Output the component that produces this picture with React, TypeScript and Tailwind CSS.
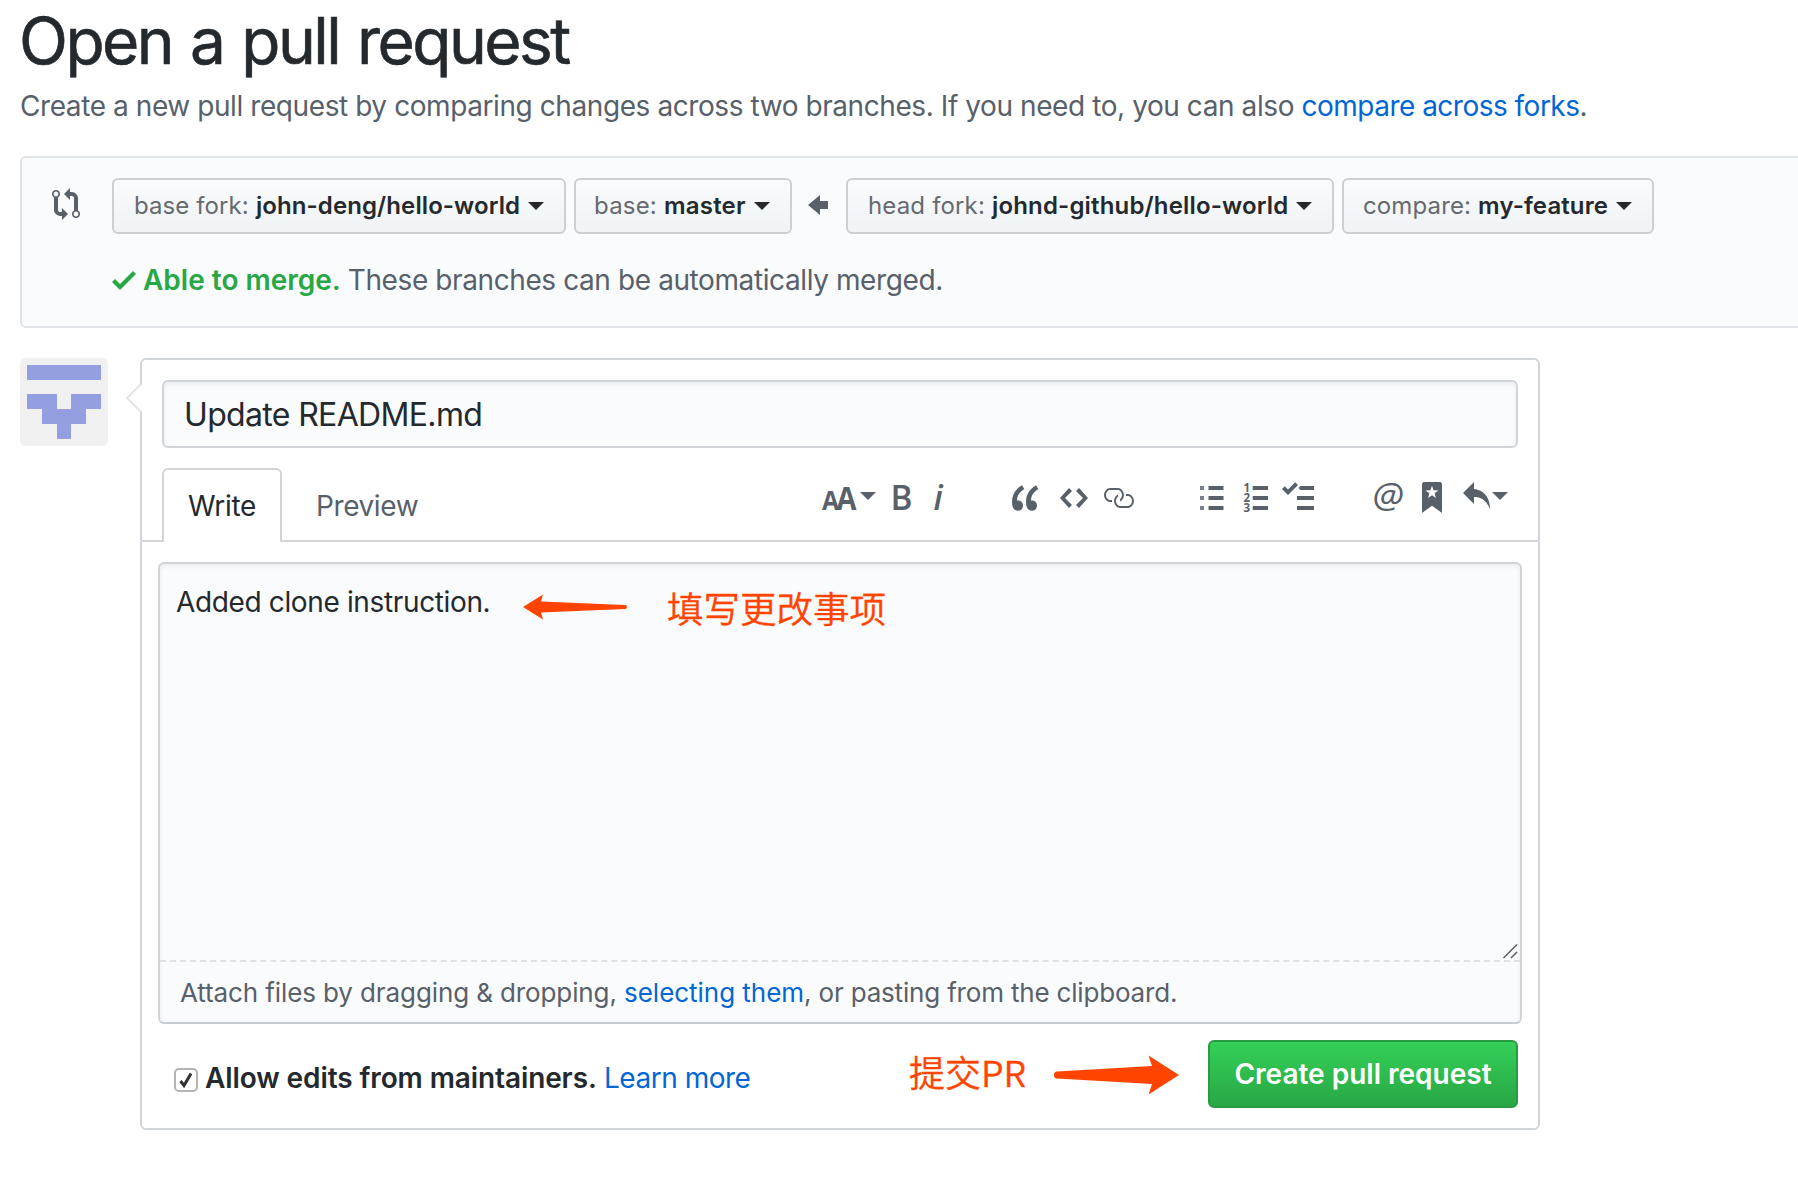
import type { ReactNode } from "react";

function Caret({ className = "" }: { className?: string }) {
  return (
    <svg viewBox="0 0 16 8" className={`h-2 w-4 shrink-0 ${className}`} fill="currentColor">
      <path d="M0 0h16L8 8z" />
    </svg>
  );
}

function Icon({ d, w, className = "" }: { d: string; w: number; className?: string }) {
  return (
    <svg viewBox={`0 0 ${w} 16`} width={w * 2} height={32} className={`block shrink-0 ${className}`} fill="currentColor">
      <path fillRule="evenodd" d={d} />
    </svg>
  );
}

const COMPARE =
  "M5 12H4c-.27-.02-.48-.11-.69-.31-.21-.2-.3-.42-.31-.69V4.72A1.993 1.993 0 0 0 2 1a1.993 1.993 0 0 0-1 3.72V11c.03.78.34 1.47.94 2.06.6.59 1.28.91 2.06.94h1v2l3-3-3-3v2zM2 1.8c.66 0 1.2.55 1.2 1.2 0 .65-.55 1.2-1.2 1.2C1.35 4.2.8 3.65.8 3c0-.65.55-1.2 1.2-1.2zm11 9.48V5c-.03-.78-.34-1.47-.94-2.06-.6-.59-1.28-.91-2.06-.94H9V0L6 3l3 3V4h1c.27.02.48.11.69.31.21.2.3.42.31.69v6.28A1.993 1.993 0 0 0 12 15a1.993 1.993 0 0 0 1-3.72zm-1 2.92c-.66 0-1.2-.55-1.2-1.2 0-.65.55-1.2 1.2-1.2.65 0 1.2.55 1.2 1.2 0 .65-.55 1.2-1.2 1.2z";
const CHECK = "M12 5l-8 8-4-4 1.5-1.5L4 10l6.5-6.5L12 5z";
const ARROW_LEFT = "M6 3L0 8l6 5v-3h4V6H6z";
const QUOTE =
  "M6.16 3.5C3.73 5.06 2.55 6.67 2.55 9.36c.16-.05.3-.05.44-.05 1.27 0 2.5.86 2.5 2.41 0 1.61-1.03 2.61-2.5 2.61-1.9 0-2.99-1.52-2.99-4.25 0-3.8 1.75-6.53 5.02-8.42L6.16 3.5zm7 0c-2.43 1.56-3.61 3.17-3.61 5.86.16-.05.3-.05.44-.05 1.27 0 2.5.86 2.5 2.41 0 1.61-1.03 2.61-2.5 2.61-1.89 0-2.98-1.52-2.98-4.25 0-3.8 1.75-6.53 5.02-8.42l1.14 1.84h-.01z";
const CODE = "M9.5 3L8 4.5 11.5 8 8 11.5 9.5 13 14 8 9.5 3zm-5 0L0 8l4.5 5L6 11.5 2.5 8 6 4.5 4.5 3z";
const LINK =
  "M4 9h1v1H4c-1.5 0-3-1.69-3-3.5S2.55 3 4 3h4c1.45 0 3 1.69 3 3.5 0 1.41-.91 2.72-2 3.25V8.59c.58-.45 1-1.27 1-2.09C10 5.22 8.98 4 8 4H4c-.98 0-2 1.22-2 2.5S3 9 4 9zm9-3h-1v1h1c1 0 2 1.22 2 2.5S13.98 12 13 12H9c-.98 0-2-1.22-2-2.5 0-.83.42-1.64 1-2.09V6.25c-1.09.53-2 1.84-2 3.25C6 11.31 7.55 13 9 13h4c1.45 0 3-1.69 3-3.5S14.5 6 13 6z";
const REPLY = "M6 3.5c3.92.44 8 3.125 8 10-2.312-5.062-4.75-6-8-6V11L.5 5.5 6 0v3.5z";

function SelectButton({ label, value, className }: { label: string; value: string; className: string }) {
  return (
    <button
      className={`flex h-14 shrink-0 items-center rounded-md border-2 border-[#cdcfd2] bg-gradient-to-b from-[#fafbfc] to-[#eff3f6] text-[24px] leading-[36px] text-[#24292e] ${className}`}
    >
      <span className="text-[#666a6e]">{label}</span>
      <span className="ml-[7px] font-semibold">{value}</span>
      <Caret className="ml-2" />
    </button>
  );
}

function Tool({ children, className }: { children: ReactNode; className: string }) {
  return <span className={`flex h-8 shrink-0 items-start ${className}`}>{children}</span>;
}

function Toolbar() {
  return (
    <div className="flex items-start pt-[14px] text-[#586069]">
      <Tool className="w-[34px]">
        <svg viewBox="0 0 34 32" className="h-8 w-[34px] overflow-visible font-['Open_Sans'] font-bold" fill="currentColor">
          <text x="0" y="28" fontSize="27.5" textLength="17" lengthAdjust="spacingAndGlyphs">A</text>
          <text x="14.5" y="28" fontSize="33" textLength="20" lengthAdjust="spacingAndGlyphs">A</text>
        </svg>
      </Tool>
      <Caret className="mt-[10px] ml-[4px]" />
      <Tool className="ml-[17px] w-[19px]">
        <svg viewBox="0 0 19 32" className="h-8 w-[19px] overflow-visible font-['Open_Sans'] font-semibold" fill="currentColor">
          <text x="-2.5" y="28" fontSize="33.5" textLength="22" lengthAdjust="spacingAndGlyphs">B</text>
        </svg>
      </Tool>
      <Tool className="ml-[22px] w-[10px]">
        <svg viewBox="0 0 10 32" className="h-8 w-[10px] overflow-visible font-['Open_Sans'] font-semibold italic" fill="currentColor">
          <text x="-0.5" y="28" fontSize="33.5">i</text>
        </svg>
      </Tool>
      <Icon d={QUOTE} w={14} className="ml-[68px]" />
      <Icon d={CODE} w={14} className="ml-[20px]" />
      <Icon d={LINK} w={16} className="ml-[14px]" />
      <svg viewBox="0 0 24 32" className="ml-[66px] h-8 w-6" fill="currentColor">
        <path d="M0 4h4v4H0zM0 14h4v4H0zM0 24h4v4H0z" opacity=".8" />
        <path d="M8.500 4h15v4h-15zM8.500 14h15v4h-15zM8.500 24h15v4h-15z" />
      </svg>
      <svg viewBox="0 0 24 32" className="ml-[20px] h-8 w-6 overflow-visible font-['Open_Sans'] font-bold" fill="currentColor">
        <text x="-0.500" y="10" fontSize="11.500">1</text>
        <text x="-0.500" y="19.800" fontSize="11.500">2</text>
        <text x="-0.500" y="29.600" fontSize="11.500">3</text>
        <path d="M8.700 4h15.300v4H8.700zM8.700 14h15.300v4H8.700zM8.700 24h15.300v4H8.700z" />
      </svg>
      <svg viewBox="0 0 32 32" className="ml-[14px] h-8 w-8" fill="currentColor">
        <path d="M18.500 4H32v4H18.500l-2-2zM15 14h17v4H15zM15 24h17v4H15zM6 13L0 7l2.800-2.800L6 7.400 13.200 0.200 16 3z" />
      </svg>
      <Tool className="ml-[60px] w-[28px]">
        <svg viewBox="0 0 28 32" className="h-8 w-[28px] overflow-visible font-['Open_Sans'] italic" fill="currentColor">
          <text x="-1.500" y="25.500" fontSize="35" textLength="31" lengthAdjust="spacingAndGlyphs">@</text>
        </svg>
      </Tool>
      <svg viewBox="0 0 20 32" className="ml-[20px] h-8 w-5" fill="currentColor">
        <path
          fillRule="evenodd"
          d="M1.500 0h17L20 1.500V31l-10-7.300L0 31V1.500zM10 3.800l-1.600 4.500-4.900.1 3.900 2.900L6 16l4-2.800 4 2.800-1.400-4.700 3.900-2.900-4.900-.1z"
        />
      </svg>
      <Icon d={REPLY} w={14} className="ml-[20px]" />
      <Caret className="mt-[10px] ml-[2px]" />
    </div>
  );
}

export default function App() {
  return (
    <div className="h-[1184px] w-full overflow-hidden bg-white pl-5 font-['Inter',sans-serif] text-[28px] leading-10 text-[#24292e]">
      <h1 className="-ml-px pt-[5px] text-[64px] leading-[72px] tracking-[-2.55px] whitespace-nowrap [-webkit-text-stroke:0.6px] [word-spacing:2.5px]">
        Open a pull request
      </h1>
      <p className="mt-[9px] tracking-[-0.418px] whitespace-pre text-[#586069]">
        Create a new pull request by comparing changes across two branches. If you need to, you can also{" "}
        <a className="tracking-[-0.51px] text-[#0366d6]">compare across forks</a>.
      </p>

      <section className="mt-[30px] -mr-2 h-[172px] rounded-md border-2 border-[#e1e4e8] bg-[#fafbfc]">
        <div className="flex items-center pt-[20px] pl-[30px]">
          <Icon d={COMPARE} w={14} className="-mt-[4px] text-[#586069]" />
          <SelectButton label="base fork:" value="john-deng/hello-world" className="ml-[32px] w-[454px] pl-[20px] tracking-[0.1px]" />
          <SelectButton label="base:" value="master" className="ml-2 w-[218px] pl-[18px] tracking-[0.2px]" />
          <Icon d={ARROW_LEFT} w={10} className="-mt-[3px] ml-[16px] text-[#586069]" />
          <SelectButton label="head fork:" value="johnd-github/hello-world" className="ml-[18px] w-[488px] pl-[20px] tracking-[0.16px]" />
          <SelectButton label="compare:" value="my-feature" className="ml-2 w-[312px] pl-[19px] tracking-[0.12px]" />
        </div>
        <div className="mt-[26px] flex items-center pl-[90px]">
          <Icon d={CHECK} w={12} className="text-[#28a745]" />
          <span className="ml-[7px] font-semibold whitespace-nowrap text-[#28a745]">Able to merge.</span>
          <span className="ml-[7px] tracking-[-0.4px] whitespace-nowrap text-[#586069]">
            These branches can be automatically merged.
          </span>
        </div>
      </section>

      <div className="mt-[30px] flex items-start">
        <svg viewBox="0 0 88 88" className="size-[88px] shrink-0 rounded-md bg-[#f0f0f0]" shapeRendering="crispEdges">
          <path fill="#949fe2" d="M7 7h74v15H7zM7 36h30v15h14V36h30v15H66v15H51v15H37V66H22V51H7z" />
        </svg>

        <form className="relative ml-[32px] h-[772px] w-[1400px] rounded-md border-2 border-[#d1d5da] bg-white">
          <svg viewBox="0 0 16 32" className="absolute top-[22px] -left-[17px] h-8 w-4 overflow-visible">
            <path d="M17.500 2L2 16l15.500 14z" fill="#fff" />
            <path d="M16 2L2 16l14 14" fill="none" stroke="#e1e4e8" strokeWidth="2" />
          </svg>

          <div className="px-5 pt-5">
            <div className="flex h-[68px] items-center rounded-md border-2 border-[#d1d5da] bg-[#fafbfc] pt-[2px] pl-[20px] text-[32px] tracking-[-0.66px] shadow-[inset_0_2px_4px_rgba(27,31,35,0.075)]">
              Update README.md
            </div>
          </div>

          <div className="mt-5 flex h-[74px] border-b-2 border-[#d1d5da] pl-5">
            <span className="h-[74px] w-[120px] shrink-0 rounded-t-md border-2 border-b-0 border-[#d1d5da] bg-white pt-[16px] pl-[24px] tracking-[-0.32px]">
              Write
            </span>
            <span className="w-[540px] shrink-0 pt-[18px] pl-[34px] tracking-[-0.4px] text-[#586069]">Preview</span>
            <Toolbar />
          </div>

          <div className="relative mt-5 ml-4 flex h-[462px] w-[1364px] flex-col rounded-md border-2 border-[#d1d5da] border-b-[#c6cbd1] bg-[#fafbfc] shadow-[inset_0_2px_4px_rgba(27,31,35,0.075)]">
            <div className="flex-1 pt-[18px] pl-[16px] tracking-[-0.36px]">Added clone instruction.</div>
            <div className="h-[62px] border-t-2 border-dashed border-[#dfe2e5] pt-[11px] pl-[20px] text-[26px] whitespace-pre text-[#586069]">
              <span className="tracking-[-0.11px]">Attach files by dragging &amp; dropping, </span>
              <a className="tracking-[-0.03px] text-[#0366d6]">selecting them</a>
              <span className="tracking-[-0.18px]">, or pasting from the clipboard.</span>
            </div>
            <svg viewBox="0 0 16 16" className="absolute right-[2px] bottom-[63px] size-4" stroke="#5a5d60" strokeWidth="1.500">
              <path d="M1.500 15L15 1.500M9 15l6-6" />
            </svg>
            <div className="absolute top-[18px] left-[362px] flex items-center text-[#ff4400]">
              <svg viewBox="0 0 106 26" className="mt-[3px] h-[26px] w-[106px]" fill="currentColor">
                <path d="M1 13L21 0.500 19 7.500 103 11a2 2 0 0 1 0 4L19 18.500l2 7z" />
              </svg>
              <span className="mt-[6px] ml-[39px] font-['Noto_Sans_CJK_SC',sans-serif] text-[36.500px] font-[350] whitespace-nowrap [-webkit-text-stroke:0.3px]">
                填写更改事项
              </span>
            </div>
          </div>

          <div className="flex pt-4 pl-[32px]">
            <span className="mt-[28px] flex h-6 w-6 shrink-0 items-center justify-center rounded-[5px] border-2 border-[#b4b4b4] bg-white">
              <svg viewBox="0 0 16 18" className="h-[18px] w-4" fill="none" stroke="#333" strokeWidth="3">
                <path d="M2.500 10l3.500 4.500L13 2.500" />
              </svg>
            </span>
            <span className="mt-[18px] ml-[7px] w-[392px] shrink-0 font-semibold tracking-[-0.1px] whitespace-nowrap">
              Allow edits from maintainers.
            </span>
            <a className="mt-[18px] ml-[7px] w-[305px] shrink-0 tracking-[-0.48px] whitespace-nowrap text-[#0366d6]">Learn more</a>
            <span className="mt-[11px] w-[145px] shrink-0 font-['Noto_Sans_CJK_SC',sans-serif] text-[36px] font-[350] whitespace-nowrap text-[#ff4400] [-webkit-text-stroke:0.3px]">
              提交PR
            </span>
            <svg viewBox="0 0 126 40" className="mt-[15px] h-10 w-[126px] shrink-0 text-[#ff4400]" fill="currentColor">
              <path d="M125 20L94.500 0.500 98 11 3 16.500a3 3.500 0 0 0 0 7L98 29l-3.500 10.500z" />
            </svg>
            <button className="ml-[28px] h-[68px] w-[310px] shrink-0 rounded-md border-2 border-[#2a9b43] bg-gradient-to-b from-[#34d058] to-[#28a745] font-semibold whitespace-nowrap text-white">
              Create pull request
            </button>
          </div>
        </form>
      </div>
    </div>
  );
}
